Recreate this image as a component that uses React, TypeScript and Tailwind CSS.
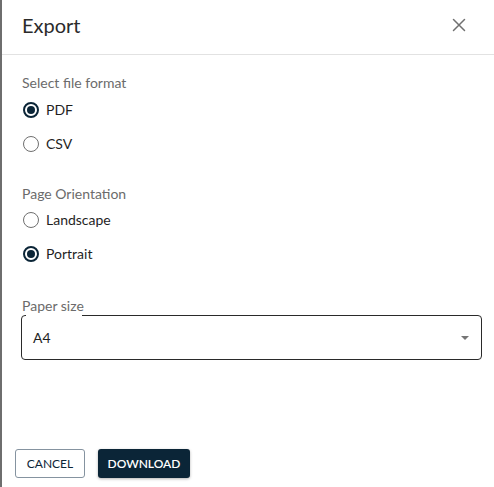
import React from "react";

function Radio({ checked, label }: { checked: boolean; label: string }) {
  return (
    <div className="flex h-[34px] items-center">
      <span
        className={
          checked
            ? "flex h-[16px] w-[16px] items-center justify-center rounded-full border-2 border-[#0b2537] ml-[2px]"
            : "flex h-[16px] w-[16px] items-center justify-center rounded-full border-[1.5px] border-[#6f6f6f] ml-[2px]"
        }
      >
        {checked && <span className="block h-[8px] w-[8px] rounded-full bg-[#0b2537]" />}
      </span>
      <span className="ml-[7px] text-[14px] leading-[18px] text-[#1f1f1f]">{label}</span>
    </div>
  );
}

export default function App() {
  return (
    <div
      className="flex h-[487px] w-[494px] overflow-hidden bg-white"
      style={{ fontFamily: "Lato, 'Noto Sans', sans-serif" }}
    >
      <div className="w-[2px] shrink-0 bg-[#6e6e6e]" />
      <div className="flex flex-1 flex-col">
        <div className="flex h-[55px] shrink-0 items-center justify-between border-b border-[#e2e2e2] pb-[5px] pl-[20px] pr-[28px]">
          <span className="text-[20px] leading-[24px] text-[#2b2b2b]">Export</span>
          <svg width="14" height="14" viewBox="0 0 14 14" className="text-[#707070]">
            <path d="M1.5 1.5 L12.5 12.5 M12.5 1.5 L1.5 12.5" stroke="currentColor" strokeWidth="1.5" strokeLinecap="round" />
          </svg>
        </div>
        <div className="flex flex-col pl-[19px] pr-[12px] pt-[19px]">
          <div className="ml-px h-[19px] text-[14px] leading-[18px] text-[#6b6b6b]">Select file format</div>
          <Radio checked label="PDF" />
          <Radio checked={false} label="CSV" />
          <div className="ml-px mt-[24px] h-[18px] text-[14px] leading-[18px] text-[#6b6b6b]">Page Orientation</div>
          <Radio checked={false} label="Landscape" />
          <Radio checked label="Portrait" />
          <div className="ml-px mt-[26px] h-[15px] text-[14px] leading-[18px] text-[#6b6b6b]">Paper size</div>
          <div className="relative mt-[3px] flex h-[45px] items-center justify-between rounded-[4px] border border-[#2a2a2a] pl-[11px] pr-[12px]">
            <span className="absolute -top-[1px] left-[4px] h-[2px] w-[56px] bg-white" />
            <span className="text-[14px] leading-[18px] text-[#1f1f1f]">A4</span>
            <svg width="8" height="4" viewBox="0 0 8 4">
              <path d="M0 0 L8 0 L4 4 Z" fill="#757575" />
            </svg>
          </div>
        </div>
        <div className="flex-1" />
        <div className="flex items-center gap-[13px] pb-[9px] pl-[13px]">
          <button className="flex h-[29px] w-[70px] items-center justify-center rounded-[3px] border border-[#8593a0] bg-white text-[12px] leading-none text-[#0b2537]">
            CANCEL
          </button>
          <button className="flex h-[29px] w-[92px] items-center justify-center rounded-[3px] bg-[#0b2537] text-[12px] font-semibold leading-none text-white shadow-[0_1px_3px_rgba(0,0,0,0.3)]">
            DOWNLOAD
          </button>
        </div>
      </div>
    </div>
  );
}
